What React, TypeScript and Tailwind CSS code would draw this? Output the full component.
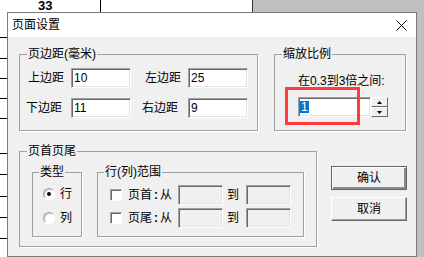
import type { ReactNode } from 'react'

const FONT = "font-['Liberation_Sans','Noto_Sans_CJK_SC',sans-serif]"

// sheet row lines visible left of the dialog
const SHEET_ROWS = [
  'h-[26px]', 'h-[21px]', 'h-[20px]', 'h-[20px]', 'h-[20px]',
  'h-[35px]', 'h-[21px]', 'h-[22px]', 'h-[21px]', 'h-[21px]',
]

function Group({ label, className, children, legendClass = 'ml-[7px]' }: { label: string; className: string; children: ReactNode; legendClass?: string }) {
  return (
    <fieldset className={`border border-[#a0a0a0] shadow-[1px_1px_0_#fff] ${className}`}>
      <legend className={`px-[1px] leading-[14px] ${legendClass}`}>{label}</legend>
      {children}
    </fieldset>
  )
}

function Field({ value, className, disabled }: { value?: string; className: string; disabled?: boolean }) {
  return (
    <div className={`h-[20px] flex items-center pl-[2px] leading-[12px] border border-t-[#a0a0a0] border-l-[#a0a0a0] border-b-white border-r-white shadow-[inset_1px_1px_0_#696969,inset_-1px_-1px_0_#e3e3e3]
      ${disabled ? 'bg-[#f0f0f0]' : 'bg-white'} ${className}`}>
      {value}
    </div>
  )
}

function Radio({ checked, label }: { checked?: boolean; label: string }) {
  return (
    <div className="h-[16px] flex items-center ml-[10px]">
      <span className="w-[12px] h-[12px] rounded-full border border-t-[#a0a0a0] border-l-[#a0a0a0] border-b-white border-r-white bg-white flex items-center justify-center shadow-[inset_1px_1px_0_#c8c8c8]">
        {checked && <span className="w-[4px] h-[4px] rounded-full bg-black" />}
      </span>
      <span className="ml-[5px] leading-[14px]">{label}</span>
    </div>
  )
}

function RangeRow({ head }: { head: string }) {
  return (
    <div className="h-[20px] flex items-center">
      <span className="ml-[12px] w-[12px] h-[12px] bg-white border border-t-[#a0a0a0] border-l-[#a0a0a0] border-b-white border-r-white shadow-[inset_1px_1px_0_#696969]" />
      <span className="ml-[6px] flex leading-[14px]">
        {head}<span className="w-[8px] text-center font-bold">:</span>从
      </span>
      <Field disabled className="ml-[6px] w-[45px]" />
      <span className="ml-[4px] leading-[14px]">到</span>
      <Field disabled className="ml-[7px] w-[45px]" />
    </div>
  )
}

function WinButton({ label, primary }: { label: string; primary?: boolean }) {
  return (
    <button className={`w-[76px] h-[24px] bg-[#f0f0f0] flex items-center justify-center leading-[14px]
      ${primary
        ? 'border border-[#646464] shadow-[inset_1px_1px_0_#fff,inset_-2px_-2px_0_#8a8a8a]'
        : 'border border-t-white border-l-white border-b-[#696969] border-r-[#696969] shadow-[inset_-1px_-1px_0_#a0a0a0]'
      }`}>
      {label}
    </button>
  )
}

function SpinButton({ up }: { up?: boolean }) {
  return (
    <div className="w-[17px] h-[10px] bg-[#f0f0f0] flex items-center justify-center border border-t-white border-l-white border-b-[#696969] border-r-[#696969]">
      <svg width="5" height="3" viewBox="0 0 5 3">
        {up ? <polygon points="2.5,0 5,3 0,3" fill="#000" /> : <polygon points="0,0 5,0 2.5,3" fill="#000" />}
      </svg>
    </div>
  )
}

export default function App() {
  return (
    <div className={`relative w-[424px] h-[257px] overflow-hidden flex flex-col bg-white text-[12px] text-black ${FONT}`}>
      {/* Sheet header behind the dialog */}
      <div className="h-[12px] flex shrink-0">
        <div className="w-[101px] border-r border-black pl-[38px]">
          <span className="block text-[13px] font-bold leading-[12px]">33</span>
        </div>
        <div className="w-[152px] border-r border-[#333]" />
        <div className="flex-1 bg-[#c0c0c0]" />
      </div>

      <div className="flex flex-1 min-h-0">
        {/* Sheet rows */}
        <div className="w-[7px] flex flex-col">
          {SHEET_ROWS.map((h, i) => (
            <div key={i} className={`${h} border-b border-black`} />
          ))}
        </div>

        {/* Dialog */}
        <div className="w-[410px] shrink-0 border border-[#7a7a7a] flex flex-col">
          <div className="h-[24px] bg-white flex items-center justify-between">
            <span className="pl-[4px] leading-[14px]">页面设置</span>
            <svg width="11" height="11" viewBox="0 0 11 11" className="mr-[9px]">
              <line x1="0.5" y1="0.5" x2="10.5" y2="10.5" stroke="#000" strokeWidth="1" />
              <line x1="10.5" y1="0.5" x2="0.5" y2="10.5" stroke="#000" strokeWidth="1" />
            </svg>
          </div>

          <div className="flex-1 bg-[#f0f0f0] pl-[11px] pt-[10px]">
            <div className="flex gap-[16px]">
              <Group label="页边距(毫米)" className="w-[239px] h-[84px]">
                <div className="pt-[7px] flex flex-col gap-[10px]">
                  <div className="flex items-center h-[20px]">
                    <span className="ml-[8px] w-[36px] leading-[14px]">上边距</span>
                    <Field value="10" className="ml-[7px] w-[60px]" />
                    <span className="ml-[14px] w-[36px] leading-[14px]">左边距</span>
                    <Field value="25" className="ml-[7px] w-[60px]" />
                  </div>
                  <div className="flex items-center h-[20px]">
                    <span className="ml-[6px] w-[36px] leading-[14px]">下边距</span>
                    <Field value="11" className="ml-[9px] w-[60px]" />
                    <span className="ml-[11px] w-[36px] leading-[14px]">右边距</span>
                    <Field value="9" className="ml-[10px] w-[60px]" />
                  </div>
                </div>
              </Group>

              <Group label="缩放比例" className="w-[132px] h-[84px]">
                <div className="mt-[10px] ml-[23px] h-[20px] flex items-center leading-[14px]">在0.3到3倍之间:</div>
                <div className="mt-[6px] ml-[23px] flex">
                  <Field className="w-[73px]" value="" />
                  <div className="-ml-[73px] w-[73px] h-[20px] flex items-center pl-[2px]">
                    <span className="bg-[#0078d7] text-white leading-[12px] px-[1px]">1</span>
                  </div>
                  <div className="flex flex-col">
                    <SpinButton up />
                    <SpinButton />
                  </div>
                </div>
              </Group>
            </div>

            <div className="flex mt-[13px]">
              <Group label="页首页尾" className="w-[298px] h-[103px]">
                <div className="mt-[7px] ml-[12px] flex gap-[15px]">
                  <Group label="类型" className="w-[50px] h-[72px]" legendClass="ml-[6px]">
                    <div className="mt-[7px] flex flex-col gap-[8px]">
                      <Radio checked label="行" />
                      <Radio label="列" />
                    </div>
                  </Group>
                  <Group label="行(列)范围" className="w-[207px] h-[72px]" legendClass="ml-[6px]">
                    <div className="mt-[6px] flex flex-col gap-[3px]">
                      <RangeRow head="页首" />
                      <RangeRow head="页尾" />
                    </div>
                  </Group>
                </div>
              </Group>

              <div className="ml-[14px] pt-[22px] flex flex-col gap-[7px]">
                <WinButton primary label="确认" />
                <WinButton label="取消" />
              </div>
            </div>
          </div>
        </div>

        <div className="flex-1 bg-[#c0c0c0]" />
      </div>

      {/* annotation box */}
      <div className="absolute left-[285px] top-[87px] w-[75px] h-[38px] border-[3px] border-[#ff3b3b]" />
    </div>
  )
}
